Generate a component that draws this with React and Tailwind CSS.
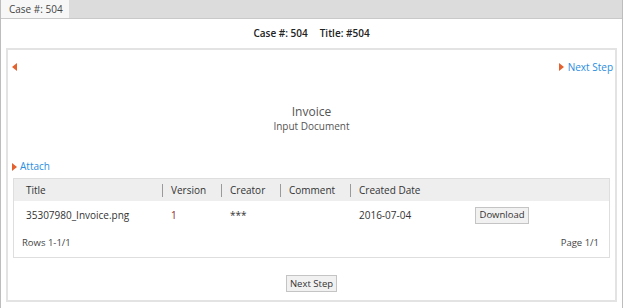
const Arrow = ({ left }) => (
  <svg width="5" height="8" viewBox="0 0 5 8" className="shrink-0">
    {left ? (
      <path d="M5 0 L0 4 L5 8 Z" fill="#e4622f" />
    ) : (
      <path d="M0 0 L5 4 L0 8 Z" fill="#e4622f" />
    )}
  </svg>
)

const cols = ['Title', 'Version', 'Creator', 'Comment', 'Created Date']

const App = () => {
  return (
    <div className="w-[623px] h-[308px] bg-white text-[10px] text-[#333] font-['Open_Sans',sans-serif] border-x border-[#bdbdbd] flex flex-col">
      <div className="h-[19px] bg-[#dcdcdc] border-b border-[#c9c9c9] flex items-end">
        <div className="h-[18px] w-[68px] pl-[8px] bg-[#f7f7f7] flex items-center text-[10px] text-[#444]">Case #: 504</div>
      </div>
      <div className="px-[5px] flex-1 flex flex-col">
        <div className="h-[29px] flex items-center justify-center gap-[12px] font-semibold text-[10px] text-[#222]">
          <span>Case #: 504</span>
          <span>Title: #504</span>
        </div>
        <div className="border-2 border-[#e3e3e3] flex-1 mb-[6px] px-[4px] flex flex-col">
          <div className="flex items-center justify-between mt-[11px] h-[12px]">
            <Arrow left />
            <div className="flex items-center gap-[4px] text-[#2a8de0] text-[10px] -mr-[2px]">
              <Arrow />
              <span>Next Step</span>
            </div>
          </div>
          <div className="flex flex-col items-center mt-[32px] text-[#555]">
            <span className="text-[12px] leading-[14px]">Invoice</span>
            <span className="text-[10px] leading-[14px]">Input Document</span>
          </div>
          <div className="flex items-center gap-[3px] mt-[27px] text-[#2a8de0] leading-[13px]">
            <Arrow />
            <span>Attach</span>
          </div>
          <div className="border border-[#dedede] mx-[1px] mt-[5px]">
            <div className="grid grid-cols-[148px_59px_59px_70px_119px_1fr] bg-[#eeeeee] h-[22px] items-center">
              {cols.map((c, i) => (
                <div key={c} className={`leading-[13px] ${i === 0 ? 'pl-[12px]' : 'pl-[8px] border-l border-[#9a9a9a]'}`}>
                  {c}
                </div>
              ))}
              <div></div>
            </div>
            <div className="grid grid-cols-[148px_59px_59px_70px_119px_1fr] h-[28px] items-center">
              <div className="pl-[12px]">35307980_Invoice.png</div>
              <div className="pl-[9px] text-[#8a2a2a]">1</div>
              <div className="pl-[9px]">***</div>
              <div></div>
              <div className="pl-[9px]">2016-07-04</div>
              <div>
                <button className="ml-[6px] h-[17px] w-[54px] bg-[#f1f1f1] border border-[#c4c4c4] text-[9.5px] leading-[14px] text-[#333]">Download</button>
              </div>
            </div>
            <div className="flex justify-between items-center h-[28px] px-[8px] text-[9.5px] text-[#444]">
              <span>Rows 1-1/1</span>
              <span className="pr-[2px]">Page 1/1</span>
            </div>
          </div>
          <div className="flex justify-center mt-[17px]">
            <button className="h-[17px] w-[51px] bg-[#f1f1f1] border border-[#c4c4c4] text-[9.5px] leading-[14px] text-[#333]">Next Step</button>
          </div>
        </div>
      </div>
    </div>
  )
}

export default App
